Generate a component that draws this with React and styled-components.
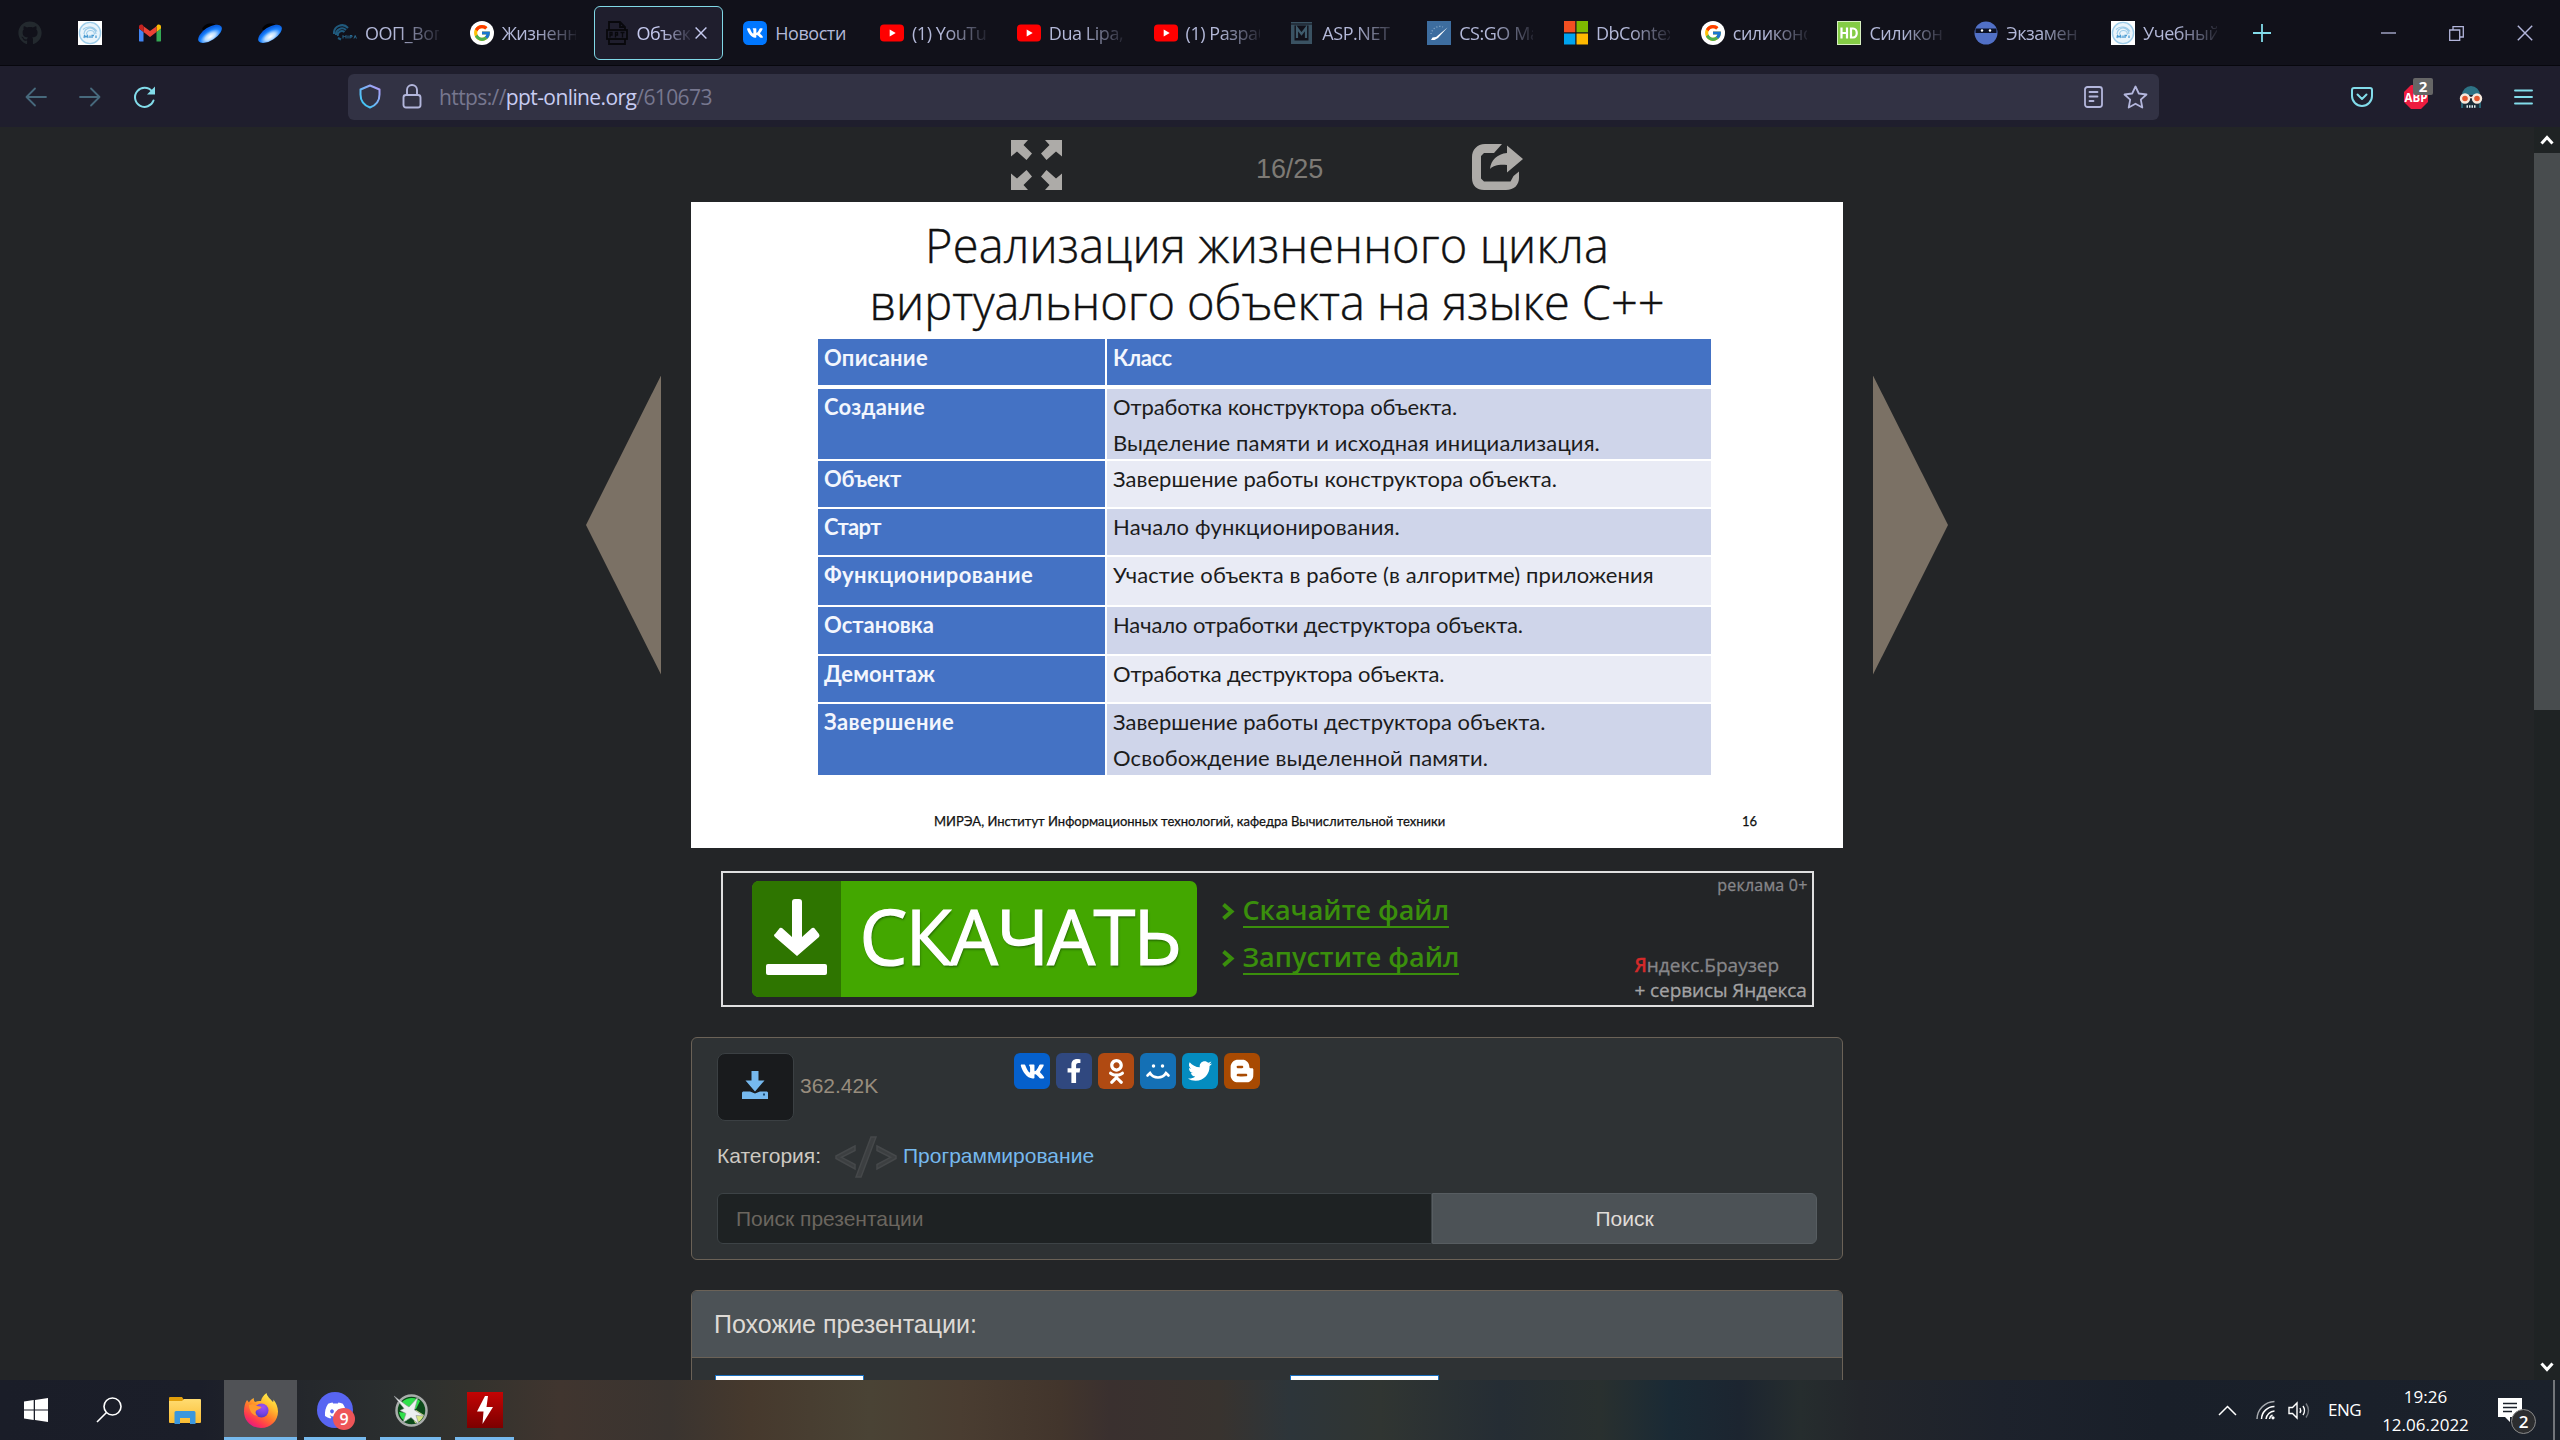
import React from "react";
import styled, { createGlobalStyle, css } from "styled-components";
import {
  FaGithub,
  FaVk,
  FaFacebookF,
  FaOdnoklassniki,
  FaTwitter,
  FaBloggerB,
  FaDiscord,
} from "react-icons/fa";
import { FcGoogle } from "react-icons/fc";

const UI = `"Open Sans", "Noto Sans", sans-serif`;
const ARIAL = `"Liberation Sans", Arial, sans-serif`;
const SLIDE = `Lato, Carlito, sans-serif`;

const GlobalStyle = createGlobalStyle`
  * { box-sizing: border-box; }
  html, body { margin: 0; padding: 0; overflow: hidden; background: #232527; }
  svg { display: block; flex: none; }
`;

const Screen = styled.div`
  width: 2560px;
  height: 1440px;
  display: flex;
  flex-direction: column;
  overflow: hidden;
  font-family: ${ARIAL};
`;

/* ---------- tab strip ---------- */

const TabStrip = styled.header`
  height: 66px;
  flex: none;
  display: flex;
  align-items: flex-start;
  padding-top: 6px;
  background: #11111a;
  border-bottom: 1px solid #07070d;
`;

const PinnedTabs = styled.div`
  display: flex;
  width: 317px;
`;

const PinnedTab = styled.div`
  width: 60px;
  height: 54px;
  display: flex;
  align-items: center;
  justify-content: center;
`;

const Tab = styled.div`
  width: 129px;
  height: 54px;
  margin: 0 3.9px;
  padding-left: ${(p) => (p.$active ? "11px" : "12px")};
  display: flex;
  align-items: center;
  gap: 8px;
  border-radius: 6px;
  ${(p) =>
    p.$active &&
    css`
      background: #1f1e2d;
      border: 1.5px solid #80d8e6;
    `}
`;

const TabTitle = styled.span`
  width: ${(p) => (p.$active ? "54px" : "74px")};
  overflow: hidden;
  white-space: nowrap;
  font: 400 18px/28px ${UI};
  letter-spacing: -0.45px;
  color: ${(p) => (p.$active ? "#c6caef" : "#b3b8d8")};
  ${(p) =>
    !p.$whole &&
    css`
      mask-image: linear-gradient(to right, #000 45%, rgba(0, 0, 0, 0.12) 100%);
    `}
`;

const CloseTab = styled.span`
  margin-left: -3px;
`;

const NewTab = styled.div`
  width: 60px;
  height: 54px;
  display: flex;
  align-items: center;
  justify-content: center;
`;

const WindowControls = styled.div`
  margin-left: auto;
  height: 54px;
  display: flex;
  align-items: center;
  gap: 53px;
  padding-right: 27px;
`;

/* ---------- navigation bar ---------- */

const NavBar = styled.nav`
  height: 61px;
  flex: none;
  display: flex;
  align-items: center;
  background: #1f1e2d;
`;

const NavButtons = styled.div`
  width: 348px;
  padding-left: 25px;
  display: flex;
  align-items: center;
  gap: 32px;
`;

const AddressBar = styled.div`
  width: 1811px;
  height: 46px;
  padding: 0 11px;
  display: flex;
  align-items: center;
  border-radius: 6px;
  background: #323244;
`;

const AddressIcon = styled.span`
  width: ${(p) => p.$w}px;
`;

const Url = styled.span`
  font: 400 21px/30px ${UI};
  letter-spacing: -0.6px;
  color: #77778f;
  white-space: pre;
  flex: 1;
  padding-top: 1px;
`;

const Domain = styled.span`
  color: #c8ccf2;
`;

const Extensions = styled.div`
  margin-left: auto;
  padding-right: 27px;
  display: flex;
  align-items: center;
  gap: 31px;
`;

const AdBlock = styled.div`
  position: relative;
`;

const AdBlockCount = styled.span`
  position: absolute;
  left: 9px;
  top: -7px;
  width: 20px;
  height: 17px;
  border-radius: 2px;
  background: #666;
  color: #fff;
  font: 700 15px/16px ${UI};
  text-align: center;
`;

/* ---------- page ---------- */

const Body = styled.main`
  height: 1253px;
  flex: none;
  display: flex;
  overflow: hidden;
`;

const Page = styled.div`
  width: 2534px;
  background: #232527;
  display: flex;
  flex-direction: column;
  align-items: center;
`;

const Scrollbar = styled.div`
  width: 26px;
  background: #1f2324;
  display: flex;
  flex-direction: column;
  align-items: center;
`;

const ScrollArrow = styled.div`
  height: 26px;
  width: 26px;
  display: flex;
  align-items: center;
  justify-content: center;
`;

const ScrollThumb = styled.div`
  width: 26px;
  height: 557px;
  background: #484c4e;
  margin-bottom: auto;
`;

const ViewerTools = styled.div`
  width: 1152px;
  height: 75px;
  flex: none;
  display: grid;
  grid-template-columns: 245px 215px auto;
  padding: 13px 0 0 320px;
`;

const PageCounter = styled.span`
  font: 400 27px/40px ${ARIAL};
  letter-spacing: -0.1px;
  padding-top: 9px;
  color: #7d7a75;
`;

const ShareIcon = styled.span`
  padding: 4px 0 0 1px;
`;

const Viewer = styled.div`
  display: flex;
  align-items: center;
  gap: 30px;
  flex: none;
`;

const SlideArrow = styled.div`
  width: 75px;
  height: 299px;
  background: #7b7165;
  clip-path: ${(p) =>
    p.$next ? "polygon(0 0, 100% 50%, 0 100%)" : "polygon(100% 0, 0 50%, 100% 100%)"};
`;

const Slide = styled.section`
  width: 1152px;
  height: 646px;
  background: #fff;
  display: flex;
  flex-direction: column;
  color: #1c1c1c;
`;

const SlideTitle = styled.h1`
  margin: 15px 0 0;
  height: 122px;
  font: 300 47px/57px ${UI};
  text-align: center;
  color: #111;
  -webkit-text-stroke: 0.4px #111;
  white-space: pre;
`;

const TitleLine = styled.div`
  letter-spacing: ${(p) => p.$ls}px;
`;

const SlideTable = styled.div`
  width: 894px;
  height: 436px;
  margin-left: 127px;
  display: grid;
  grid-template-columns: 287px 604px;
  grid-template-rows: 48px 70px 46px 46px 48px 47px 46px 71px;
  column-gap: 2px;
  row-gap: 2px;
`;

const Cell = styled.div`
  padding: 0 6px;
  font-family: ${SLIDE};
  font-size: 22px;
  line-height: 36px;
  white-space: nowrap;
  ${(p) =>
    p.$head
      ? css`
          background: #4472c4;
          color: #f3f6fd;
          font-weight: 700;
        `
      : css`
          background: ${p.$light ? "#e9ebf5" : "#cfd5ea"};
        `}
  ${(p) =>
    p.$top &&
    css`
      padding-top: 1px;
      margin-bottom: 2px;
    `}
`;

const CellText = styled.div`
  letter-spacing: ${(p) => p.$ls}px;
`;

const SlideFooter = styled.div`
  margin-top: 36px;
  padding: 0 86px 0 243px;
  display: flex;
  justify-content: space-between;
  font: 400 13px/20px ${SLIDE};
  color: #111;
  -webkit-text-stroke: 0.25px #111;
`;

/* ---------- advertisement ---------- */

const Ad = styled.section`
  width: 1093px;
  height: 136px;
  margin-top: 23px;
  flex: none;
  display: flex;
  align-items: center;
  border: 2px solid #dfdfe0;
  padding-left: 29px;
`;

const AdButton = styled.div`
  width: 445px;
  height: 116px;
  display: flex;
  border-radius: 7px;
  overflow: hidden;
  background: #43a700;
`;

const AdButtonIcon = styled.div`
  width: 89px;
  background: #2e7500;
  display: flex;
  align-items: center;
  justify-content: center;
  padding: 0 0 2px 2px;
`;

const AdButtonText = styled.div`
  padding-left: 19px;
  font: 400 76px/109px ${UI};
  letter-spacing: -1.8px;
  color: #fff;
  -webkit-text-stroke: 1.2px #fff;
  text-shadow: 1px 2px 2px rgba(20, 70, 0, 0.6);
`;

const AdLinks = styled.div`
  margin-left: 24px;
  display: flex;
  flex-direction: column;
  gap: 14px;
  padding-bottom: 8px;
`;

const AdLinkRow = styled.div`
  display: flex;
  align-items: center;
  gap: 8px;
`;

const AdLink = styled.span`
  font: 600 27px/29px ${UI};
  color: #3a8f0c;
  border-bottom: 2px solid #3a8f0c;
  height: 33px;
`;

const AdNotes = styled.div`
  margin-left: auto;
  align-self: stretch;
  width: 177px;
  display: flex;
  flex-direction: column;
  font: 400 19px/25px ${UI};
  color: #a3a3a4;
  -webkit-text-stroke: 0.3px currentColor;
  white-space: nowrap;
`;

const AdLabel = styled.span`
  font-size: 16px;
  line-height: 22px;
  letter-spacing: 0.2px;
  margin: 1px 4px auto 0;
  align-self: flex-end;
  color: #87878a;
`;

const AdBrand = styled.span`
  color: #87878a;
`;

const AdBrandInitial = styled.span`
  color: #d32a2a;
  font-weight: 600;
`;

const AdServices = styled.span`
  letter-spacing: -0.1px;
  margin-bottom: 2px;
`;

/* ---------- panels ---------- */

const Panel = styled.section`
  width: 1152px;
  flex: none;
  border: 1px solid #6b6257;
  border-radius: 6px;
  background: #2e3234;
  overflow: hidden;
`;

const InfoPanel = styled(Panel)`
  height: 223px;
  margin-top: 30px;
  padding: 15px 25px 0 25px;
`;

const InfoTop = styled.div`
  display: flex;
  align-items: flex-start;
  height: 68px;
`;

const DownloadButton = styled.div`
  width: 77px;
  height: 68px;
  border-radius: 8px;
  border: 1px solid #3b4043;
  background: #191b1d;
  display: flex;
  align-items: center;
  justify-content: center;
  padding: 0 2px 4px 0;
`;

const FileSize = styled.span`
  width: 214px;
  margin-left: 6px;
  font-size: 21px;
  line-height: 66px;
  color: #988d7e;
`;

const ShareRow = styled.div`
  display: flex;
  gap: 6px;
`;

const ShareButton = styled.div`
  width: 36px;
  height: 36px;
  border-radius: 6px;
  background: ${(p) => p.$bg};
  color: #fff;
  display: flex;
  align-items: center;
  justify-content: center;
`;

const Category = styled.div`
  height: 50px;
  margin-top: 10px;
  display: flex;
  align-items: center;
  font-size: 21px;
  color: #cdc9c2;
`;

const CodeIcon = styled.span`
  margin: 1px 6px 0 14px;
`;

const CategoryLink = styled.span`
  color: #76b9ee;
`;

const SearchRow = styled.div`
  display: flex;
  margin-top: 12px;
  font-size: 21px;
  line-height: 49px;
`;

const SearchInput = styled.div`
  width: 715px;
  height: 51px;
  padding-left: 18px;
  border: 1px solid #3d4346;
  border-radius: 6px 0 0 6px;
  background: #1e2223;
  color: #6b665f;
`;

const SearchButton = styled.div`
  width: 385px;
  height: 51px;
  border-radius: 0 6px 6px 0;
  border: 1px solid #575d61;
  background: #4c5256;
  color: #e0ddd9;
  text-align: center;
`;

const SimilarPanel = styled(Panel)`
  height: 140px;
  margin-top: 30px;
  border-radius: 6px 6px 0 0;
`;

const SimilarHeader = styled.h2`
  margin: 0;
  height: 67px;
  padding: 0 0 0 22px;
  border-bottom: 1px solid #6b6257;
  background: #4c5256;
  font: 400 25px/66px ${ARIAL};
  color: #dedad5;
`;

const SimilarList = styled.div`
  display: grid;
  grid-template-columns: 575px 575px;
  padding: 17px 0 0 23px;
`;

const Thumb = styled.div`
  width: 149px;
  height: 90px;
  border: 1px solid #1a70c0;
  background: #fff;
`;

/* ---------- taskbar ---------- */

const Taskbar = styled.footer`
  height: 60px;
  flex: none;
  display: flex;
  background: linear-gradient(
    to right,
    #1a1d28 0px,
    #1b1e29 200px,
    #25282c 310px,
    #2b2f2f 400px,
    #33322d 470px,
    #40352f 560px,
    #3a3430 670px,
    #46392d 750px,
    #4a4335 870px,
    #4a3d31 960px,
    #42352c 1060px,
    #3a302f 1110px,
    #38332f 1220px,
    #2d353a 1290px,
    #303532 1380px,
    #252d34 1500px,
    #29302f 1600px,
    #1a2a35 1670px,
    #1c2530 1740px,
    #262d2e 1800px,
    #23262b 1860px,
    #1d222c 2000px,
    #191f29 2160px,
    #1b212b 2560px
  );
`;

const TaskItem = styled.div`
  width: ${(p) => p.$w}px;
  height: 60px;
  display: flex;
  align-items: center;
  justify-content: center;
  position: relative;
  ${(p) => p.$active && "background: #505256;"}
  ${(p) =>
    p.$open &&
    css`
      &::after {
        content: "";
        position: absolute;
        bottom: 0;
        left: ${p.$active ? 0 : "7px"};
        right: ${p.$active ? 0 : "7px"};
        height: 3px;
        background: #76b9ed;
      }
    `}
`;

const DiscordTile = styled.div`
  width: 36px;
  height: 36px;
  border-radius: 50%;
  background: #5865f2;
  color: #fff;
  display: flex;
  align-items: center;
  justify-content: center;
  position: relative;
`;

const DiscordCount = styled.span`
  position: absolute;
  left: 16px;
  top: 16px;
  width: 22px;
  height: 22px;
  border-radius: 50%;
  background: #ee5558;
  font: 600 16px/22px ${UI};
  text-align: center;
`;

const BoltTile = styled.div`
  width: 36px;
  height: 36px;
  background: linear-gradient(#c40404, #7c0000);
  display: flex;
  align-items: center;
  justify-content: center;
`;

const Tray = styled.div`
  margin-left: auto;
  display: flex;
  align-items: center;
  color: #fff;
  font: 400 17px/28px ${UI};
`;

const TrayIcon = styled.span`
  margin-right: ${(p) => p.$mr}px;
`;

const Language = styled.span`
  width: 54px;
  letter-spacing: -0.5px;
`;

const Clock = styled.div`
  width: 87px;
  height: 60px;
  padding-top: 3px;
  text-align: center;
  white-space: nowrap;
  margin-right: 29px;
`;

const Notifications = styled.div`
  width: 24px;
  height: 24px;
  margin-right: 31px;
  position: relative;
`;

const NotificationCount = styled.span`
  position: absolute;
  left: 13px;
  top: 11px;
  width: 25px;
  height: 25px;
  border-radius: 50%;
  border: 1px solid #8a8a8a;
  background: #2c2d2f;
  font: 600 17px/23px ${UI};
  text-align: center;
`;

const ShowDesktop = styled.div`
  width: 7px;
  height: 60px;
  border-left: 2px solid #72757b;
`;

/* ---------- drawings ---------- */

const MireaIcon = () => (
  <svg width="24" height="24" viewBox="0 0 24 24">
    <rect width="24" height="24" fill="#fff" />
    <circle cx="12" cy="12" r="10.6" fill="#e9f4fb" stroke="#9ecdea" strokeWidth="1.4" />
    <path d="M6 13a6 6 0 0 1 12 0M8.500 13.500a4 4 0 0 1 8 0M5 8.500a9 9 0 0 1 14 2" fill="none" stroke="#9ccbe9" strokeWidth="1.200" />
    <path d="M6 17l.500-2.500 1.500 1.500 1.500-1.500.500 2.500M12 14.500v2.500M14 17v-2.500h2M18 14.500v2.500" fill="none" stroke="#4a9bd2" strokeWidth="1.300" />
  </svg>
);

const GmailIcon = () => (
  <svg width="24" height="24" viewBox="0 0 24 24">
    <path d="M1.500 20.500h4V11L1 7.600V20z" fill="#4285f4" />
    <path d="M18.500 20.500h4L23 20V7.600L18.500 11z" fill="#34a853" />
    <path d="M18.500 5.200V11L23 7.600V5.800c0-2-2.300-2.900-3.700-1.800z" fill="#fbbc04" />
    <path d="M5.500 11V5.200L12 10l6.500-4.800V11L12 15.900z" fill="#ea4335" />
    <path d="M1 5.800v1.800L5.500 11V5.200L4.700 4C3.300 2.900 1 3.800 1 5.800z" fill="#c5221f" />
  </svg>
);

const DiskIcon = () => (
  <svg width="26" height="24" viewBox="0 0 26 24">
    <defs>
      <radialGradient id="disk" cx="0.45" cy="0.7" r="0.6">
        <stop offset="0" stopColor="#fff" />
        <stop offset="0.35" stopColor="#b9dcff" />
        <stop offset="0.7" stopColor="#1d84ff" />
        <stop offset="1" stopColor="#0a5fe0" />
      </radialGradient>
    </defs>
    <path d="M5 8C7 3 14 1 19 4L9 11z" fill="#020204" />
    <ellipse cx="13" cy="12.800" rx="13.500" ry="6.500" transform="rotate(-33 13 12.800)" fill="url(#disk)" />
  </svg>
);

const RadarIcon = () => (
  <svg width="24" height="24" viewBox="0 0 24 24">
    <path d="M1 13A8 8 0 0 1 15 7M3 14a6 6 0 0 1 10-5M5 15a4 4 0 0 1 6.500-4M5 17l3 1.500" fill="none" stroke="#205a7d" strokeWidth="2" />
    <path d="M10 17.500v-3l1.500 1.500 1.500-1.500v3M15 14.500v3M17 17.500v-3h2v1.500h-2M21 17.500l1.200-3 1.200 3" fill="none" stroke="#2b6a90" strokeWidth="1" />
  </svg>
);

const GoogleIcon = () => (
  <svg width="24" height="24" viewBox="0 0 24 24">
    <circle cx="12" cy="12" r="12" fill="#fff" />
    <FcGoogle x="2.500" y="2.500" size={19} />
  </svg>
);

const PptIcon = () => (
  <svg width="22" height="24" viewBox="0 0 22 24" fill="none" stroke="#08080c" strokeWidth="1.800">
    <path d="M3 9V1h11l5 5v3M14 1v5h5M3 18v5h16v-5" />
    <rect x="1" y="9" width="20" height="9" />
    <path d="M4 16.500v-5h2v2.500H4M9.500 16.500v-5h2v2.500h-2M14.500 11.500h4M16.500 11.500v5" strokeWidth="1.300" />
  </svg>
);

const VkTabIcon = () => (
  <svg width="24" height="24" viewBox="0 0 24 24">
    <rect width="24" height="24" rx="5.500" fill="#07f" />
    <FaVk x="3.500" y="3.500" size={17} color="#fff" />
  </svg>
);

const YoutubeIcon = () => (
  <svg width="24" height="24" viewBox="0 0 24 24">
    <rect y="3.500" width="24" height="17" rx="4" fill="#f00" />
    <path d="M9.700 8.500v7l6-3.500z" fill="#fff" />
  </svg>
);

const MetanitIcon = () => (
  <svg width="24" height="24" viewBox="0 0 24 24">
    <path d="M1 1h21v22H1zM4.500 4.500v15h14v-15z" fill="#3a5262" fillRule="evenodd" />
    <path d="M1 3h21" stroke="#11111a" strokeWidth="1" />
    <path d="M7 17V7l4.500 6L16 7v10" fill="none" stroke="#3f5b6c" strokeWidth="2.200" />
  </svg>
);

const CsgoIcon = () => (
  <svg width="24" height="24" viewBox="0 0 24 24">
    <rect width="24" height="24" fill="#3d6d9f" />
    <path d="M4 19l1.500-2.500 3.500-.500L20.500 6.500 11 17l-3.500 2z" fill="#fff" />
    <path d="M4 13a9 9 0 0 1 12-7" fill="none" stroke="#8fb0cf" strokeWidth="1.200" strokeDasharray="1 2" />
  </svg>
);

const MicrosoftIcon = () => (
  <svg width="24" height="24" viewBox="0 0 24 24">
    <path d="M0 0h11.300v11.300H0z" fill="#f25022" />
    <path d="M12.500 0H24v11.300H12.500z" fill="#7fba00" />
    <path d="M0 12.500h11.300V23.500H0z" fill="#00a4ef" />
    <path d="M12.500 12.500H24V23.500H12.500z" fill="#ffb900" />
  </svg>
);

const HdIcon = () => (
  <svg width="24" height="24" viewBox="0 0 24 24">
    <rect width="24" height="24" fill="#84cc45" />
    <rect x="0.500" y="0.500" width="23" height="23" fill="none" stroke="#d6efc0" />
    <path d="M4.500 6.500v11M10 6.500v11M4.500 12H10M14 7.500v9h2c5 0 5-9 0-9z" fill="none" stroke="#fff" strokeWidth="2.200" />
  </svg>
);

const NinjaIcon = () => (
  <svg width="24" height="24" viewBox="0 0 24 24">
    <circle cx="12" cy="12" r="11.500" fill="#5170c6" />
    <path d="M1.500 7.500h21v4.500h-21z" fill="#0d1226" />
    <circle cx="8" cy="9.500" r="1.200" fill="#fff" />
    <circle cx="16" cy="9.500" r="1.200" fill="#fff" />
  </svg>
);

const CloseIcon = ({ size = 10, color = "#c6caef" }) => (
  <svg width={size} height={size} viewBox="0 0 10 10">
    <path d="M.5.500l9 9M9.500.500l-9 9" stroke={color} strokeWidth={size > 12 ? 0.9 : 1.2} />
  </svg>
);

const ArrowIcon = ({ flip }) => (
  <svg width="22" height="20" viewBox="0 0 22 20" transform={flip ? "scale(-1 1)" : undefined}>
    <path d="M21 10H1.500M10 1.500L1.500 10l8.500 8.500" fill="none" stroke="#47697c" strokeWidth="1.800" strokeLinecap="round" strokeLinejoin="round" />
  </svg>
);

const ReloadIcon = () => (
  <svg width="24" height="24" viewBox="0 0 24 24">
    <path d="M20.500 15.500A9.500 9.500 0 1 1 19 6.500" fill="none" stroke="#82dcea" strokeWidth="2" strokeLinecap="round" />
    <path d="M22 1.500v8h-8z" fill="#82dcea" />
  </svg>
);

const ShieldIcon = () => (
  <svg width="22" height="25" viewBox="0 0 22 25">
    <defs>
      <linearGradient id="shield" x1="1" y1="0" x2="0" y2="1">
        <stop offset="0" stopColor="#b79bf7" />
        <stop offset="1" stopColor="#2ccdf5" />
      </linearGradient>
    </defs>
    <path d="M11 1.500l9.500 4v5c0 6.500-4 11-9.500 13C5.500 21.500 1.500 17 1.500 10.500v-5z" fill="none" stroke="url(#shield)" strokeWidth="2" strokeLinejoin="round" />
  </svg>
);

const LockIcon = () => (
  <svg width="20" height="25" viewBox="0 0 20 25" fill="none" stroke="#b3b6dc" strokeWidth="1.900">
    <rect x="1.500" y="11" width="17" height="12.500" rx="2.500" />
    <path d="M5 11V6a5 5 0 0 1 10 0v5" />
  </svg>
);

const ReaderIcon = () => (
  <svg width="19" height="22" viewBox="0 0 19 22" fill="none" stroke="#b3b6dc" strokeWidth="1.800" strokeLinecap="round">
    <rect x="1" y="1" width="17" height="20" rx="2.500" />
    <path d="M5.500 6h8M5.500 10.500h8M5.500 15h4" />
  </svg>
);

const StarIcon = () => (
  <svg width="25" height="24" viewBox="0 0 25 24">
    <path d="M12.500 1.500l3.300 7 7.700 1-5.700 5.200 1.500 7.800-6.800-3.800-6.800 3.800 1.500-7.800L1.500 9.500l7.700-1z" fill="none" stroke="#b3b6dc" strokeWidth="1.800" strokeLinejoin="round" />
  </svg>
);

const PocketIcon = () => (
  <svg width="22" height="20" viewBox="0 0 22 20" fill="none" stroke="#82dcea" strokeWidth="2" strokeLinejoin="round" strokeLinecap="round">
    <path d="M3 1h16a2 2 0 0 1 2 2v6a10 10 0 0 1-20 0V3a2 2 0 0 1 2-2z" />
    <path d="M6.500 7.500L11 12l4.500-4.500" />
  </svg>
);

const StopIcon = () => (
  <svg width="24" height="24" viewBox="0 0 24 24">
    <path d="M7 0h10l7 7v10l-7 7H7l-7-7V7z" fill="#ee1c3f" />
    <text x="12" y="16.500" textAnchor="middle" fontFamily="Open Sans" fontWeight="700" fontSize="11.500" fill="#fff">
      ABP
    </text>
  </svg>
);

const AgentIcon = () => (
  <svg width="24" height="24" viewBox="0 0 24 24">
    <path d="M3 10a9 9 0 0 1 18 0z" fill="#2d7284" />
    <path d="M3 14h18v9H3z" fill="#1a2c38" />
    <path d="M3 16v7M21 16v7" stroke="#2d7284" strokeWidth="1.600" />
    <circle cx="6" cy="13.500" r="4" fill="#e4572e" stroke="#f6e8dc" strokeWidth="2.400" />
    <circle cx="18" cy="13.500" r="4" fill="#e4572e" stroke="#f6e8dc" strokeWidth="2.400" />
    <path d="M10 12.500h4" stroke="#f6e8dc" strokeWidth="1.500" />
    <path d="M7.500 21.500h9" stroke="#dfe9ec" strokeWidth="2.500" strokeDasharray="1.500 1" />
  </svg>
);

const MenuIcon = () => (
  <svg width="19" height="16" viewBox="0 0 19 16">
    <path d="M1 1.500h17M1 8h17M1 14.500h17" stroke="#82dcea" strokeWidth="1.900" strokeLinecap="round" />
  </svg>
);

const ExpandIcon = () => (
  <svg width="51" height="50" viewBox="0 0 51 50" fill="#adaba8">
    <path d="M0 0h17l-4.500 5L21 13.500 15.500 20 6 11.500 0 16.500z" />
    <path d="M51 0H34l4.500 5L30 13.500l5.500 6.500 9.500-8.500 6 5z" />
    <path d="M0 50h17l-4.500-5 8.500-8.500-5.500-6.500L6 38.500 0 33.500z" />
    <path d="M51 50H34l4.500-5-8.500-8.500 5.500-6.500 9.500 8.500 6-5z" />
  </svg>
);

const ShareOutIcon = () => (
  <svg width="51" height="47" viewBox="0 0 51 47" fill="#adaba8">
    <path d="M30 0H13C5 0 0 6 0 13v21c0 8 5 12 12 12h22c8 0 13-5 13-12v-6.500l-5.500 4.500-3 5.500H12l-3-3V12l3-3h10z" />
    <path d="M35 1.500l16 13.500L35 28.500V21c-8-.500-13 0-17 4 1-9 7-15 17-16z" />
  </svg>
);

const AdArrowIcon = () => (
  <svg width="62" height="78" viewBox="0 0 62 78">
    <path d="M26 3q0-3 3-3h4q3 0 3 3v35l10-9q2-1 3 1l4 5q1 2 0 3L31 57 9 38q-2-2 0-3l4-5q1-2 3-1l10 9z" fill="#fff" />
    <rect y="65" width="61" height="11" rx="2" fill="#fff" />
  </svg>
);

const AdChevron = () => (
  <svg width="14" height="17" viewBox="0 0 14 17">
    <path d="M2.500 1.500L10.500 8.500l-8 7" fill="none" stroke="#3a8f0c" strokeWidth="4" />
  </svg>
);

const SaveIcon = () => (
  <svg width="26" height="28" viewBox="0 0 26 28" fill="#76b9ee">
    <path d="M9.500 0h7v9.500h6L13 20.500 3.500 9.500h6z" />
    <path d="M1 20.500h7l5 2 5-2h7l1 1v6.500H0v-6.500z" />
    <rect x="21" y="22.500" width="2" height="2" fill="#1b4a70" />
  </svg>
);

const BracketsIcon = () => (
  <svg width="62" height="42" viewBox="0 0 62 42" fill="none" stroke="#45484a" strokeWidth="1.500">
    <path d="M20 10L1 20v2.500L20 33v-4.500L6.500 21.300 20 14.500zM42 10l19 10v2.500L42 33v-4.500l13.500-7.200L42 14.500zM36 1h5L26 41h-5z" fill="#3c3f41" />
  </svg>
);

const SmileIcon = () => (
  <svg width="26" height="24" viewBox="0 0 26 24" fill="none" stroke="#fff" strokeWidth="2.600" strokeLinecap="round">
    <path d="M2.500 16.500L5 14c3.500 6 12.500 6 16 0l2.500 2.500" />
    <circle cx="8.500" cy="7" r="1" fill="#fff" strokeWidth="1.500" />
    <circle cx="17.500" cy="7" r="1" fill="#fff" strokeWidth="1.500" />
  </svg>
);

const ChevronIcon = ({ down }) => (
  <svg width="14" height="10" viewBox="0 0 14 10">
    <path d={down ? "M1.500 1.500L7 7.500l5.500-6" : "M1.500 8.500L7 2.500l5.500 6"} fill="none" stroke="#fff" strokeWidth="3" />
  </svg>
);

const WindowsIcon = () => (
  <svg width="24" height="24" viewBox="0 0 24 24" fill="#fff">
    <path d="M0 3.500l9.700-1.400v9.300H0zM11 1.900L24 0v11.400H11zM0 12.600h9.700v9.300L0 20.500zM11 12.600h13V24l-13-1.900z" />
  </svg>
);

const SearchIcon = () => (
  <svg width="26" height="26" viewBox="0 0 26 26" fill="none" stroke="#fff" strokeWidth="1.600">
    <circle cx="16.500" cy="9.500" r="8.500" />
    <path d="M10.500 15.500L1 25" />
  </svg>
);

const FolderIcon = () => (
  <svg width="32" height="27" viewBox="0 0 32 27">
    <defs>
      <linearGradient id="folder" x1="0" y1="0" x2="0" y2="1">
        <stop offset="0" stopColor="#ffdc72" />
        <stop offset="1" stopColor="#fbbd33" />
      </linearGradient>
    </defs>
    <path d="M0 1q0-1 1-1h12l2 3-2 3H0z" fill="#e29f0b" />
    <path d="M0 4h13l2-2h16q1 0 1 1v22q0 1-1 1H1q-1 0-1-1z" fill="url(#folder)" />
    <path d="M5.500 27V15.500q0-1.500 1.500-1.500h18q1.500 0 1.500 1.500V27H21v-6H11v6z" fill="#3b97de" />
  </svg>
);

const FirefoxIcon = () => (
  <svg width="34" height="35" viewBox="0 0 34 35">
    <defs>
      <linearGradient id="fox" x1="0.850" y1="0.050" x2="0.250" y2="1">
        <stop offset="0" stopColor="#fff44f" />
        <stop offset="0.300" stopColor="#ffbd2f" />
        <stop offset="0.550" stopColor="#ff7a2a" />
        <stop offset="0.800" stopColor="#ff3750" />
        <stop offset="1" stopColor="#e31587" />
      </linearGradient>
      <radialGradient id="globe" cx="0.600" cy="0.250" r="0.800">
        <stop offset="0" stopColor="#a052f2" />
        <stop offset="0.600" stopColor="#7542e5" />
        <stop offset="1" stopColor="#4a3ab8" />
      </radialGradient>
    </defs>
    <path d="M3 7c1 1 1.500 2 2 2.500 1-2 3-4 5-4.500-.500 1.500 0 3 1 4 2-1 4-1.300 6-1C17.500 5 19.500 2 22.500 0c.500 3.500 4 6 6.500 9 .500-.500.500-1.500.300-2.500C32 9.500 34 14 34 18.500 34 28 26.500 35 17 35S0 28 0 18.500C0 13.500 1 10 3 7z" fill="url(#fox)" />
    <circle cx="17.500" cy="17.500" r="7" fill="url(#globe)" />
    <path d="M5 12c4-2 6 0 8 1 2 .500 4 .500 4.500 1-1 2.500-4 2-5.500 4-1 2 0 4 2 5-5 0-9-5-9-11z" fill="#ff9a2e" />
  </svg>
);

const JetIcon = () => (
  <svg width="34" height="34" viewBox="0 0 34 34">
    <circle cx="17.500" cy="17.500" r="15" fill="#0c4a1a" stroke="#a9adab" strokeWidth="2.500" />
    <path d="M8 9c5-5 14-5 18-1l-4 8-8 1zM5 19l7 1 1 8c-4 0-7-4-8-9z" fill="#2fe04b" />
    <path d="M22 17l8 5c-2 5-6 8-9 8l-3-7z" fill="#d8e884" />
    <path d="M0 3l12 9 3 2 9-10-3.500 13L30 23l-8-.500 3 9-8-7-8 5 3-9-6-3 4-2z" fill="#eceff0" stroke="#8b8f90" strokeWidth="0.600" />
  </svg>
);

const BoltIcon = () => (
  <svg width="16" height="28" viewBox="0 0 16 28">
    <path d="M8 0L0 15.500h6.500L5.500 28 16 11H9.500L11 0z" fill="#fff" />
  </svg>
);

const TrayUpIcon = () => (
  <svg width="19" height="11" viewBox="0 0 19 11">
    <path d="M1 10l8.500-8.500L18 10" fill="none" stroke="#fff" strokeWidth="1.500" />
  </svg>
);

const WifiIcon = () => (
  <svg width="20" height="20" viewBox="0 0 20 20" fill="none" strokeWidth="1.500">
    <path d="M1 19A18 18 0 0 1 18.500 1.500" stroke="#a7aaaf" />
    <path d="M5.500 19A13 13 0 0 1 18.500 6.500M10 19a9 9 0 0 1 8.500-8" stroke="#fff" />
    <path d="M13.500 19a5 5 0 0 1 3-4" stroke="#fff" />
    <circle cx="17" cy="17.800" r="1.600" fill="#fff" />
  </svg>
);

const SoundIcon = () => (
  <svg width="23" height="19" viewBox="0 0 23 19" fill="none" stroke="#fff" strokeWidth="1.400">
    <path d="M1 6.500h3.500L9 2v15l-4.500-4.500H1z" />
    <path d="M12 7q1.500 2.500 0 5M15 5q3 4.500 0 9" />
    <path d="M18 2.500q5 7 0 14" stroke="#73777d" />
  </svg>
);

const MessageIcon = () => (
  <svg width="24" height="24" viewBox="0 0 24 24">
    <path d="M0 0h24v19H12v5l-5-5H0z" fill="#fff" />
    <path d="M5 5.500h14M5 9.500h14M5 13.500h9" stroke="#1b212b" strokeWidth="1.300" />
  </svg>
);

const RestoreIcon = () => (
  <svg width="15" height="15" viewBox="0 0 15 15" fill="none" stroke="#b3b6dc" strokeWidth="1.300">
    <path d="M.700 4h10v10.300H.700zM4 4V.700h10.300V11H11" />
  </svg>
);

/* ---------- content ---------- */

const tabs = [
  { icon: <RadarIcon />, title: "ООП_Вопро" },
  { icon: <GoogleIcon />, title: "Жизненный" },
  { icon: <PptIcon />, title: "Объектно", active: true },
  { icon: <VkTabIcon />, title: "Новости", whole: true },
  { icon: <YoutubeIcon />, title: "(1) YouTube" },
  { icon: <YoutubeIcon />, title: "Dua Lipa, D" },
  { icon: <YoutubeIcon />, title: "(1) Разраб" },
  { icon: <MetanitIcon />, title: "ASP.NET" },
  { icon: <CsgoIcon />, title: "CS:GO Ma" },
  { icon: <MicrosoftIcon />, title: "DbContext" },
  { icon: <GoogleIcon />, title: "силиконов" },
  { icon: <HdIcon />, title: "Силикон" },
  { icon: <NinjaIcon />, title: "Экзамен" },
  { icon: <MireaIcon />, title: "Учебный" },
];

const tableRows = [
  { name: "Создание", ls: 0.27, lines: [["Отработка конструктора объекта.", -0.13], ["Выделение памяти и исходная инициализация.", 0.14]] },
  { name: "Объект", ls: -0.2, lines: [["Завершение работы конструктора объекта.", 0.02]] },
  { name: "Старт", ls: -0.6, lines: [["Начало функционирования.", 0.2]] },
  { name: "Функционирование", ls: 0.4, lines: [["Участие объекта в работе (в алгоритме) приложения", 0.11]] },
  { name: "Остановка", ls: 0, lines: [["Начало отработки деструктора объекта.", -0.11]] },
  { name: "Демонтаж", ls: 0.1, lines: [["Отработка деструктора объекта.", -0.2]] },
  { name: "Завершение", ls: 0.4, lines: [["Завершение работы деструктора объекта.", 0], ["Освобождение выделенной памяти.", 0.12]] },
];

const shares = [
  { bg: "#0560cc", icon: <FaVk size={25} /> },
  { bg: "#30487f", icon: <FaFacebookF size={24} /> },
  { bg: "#b04a12", icon: <FaOdnoklassniki size={25} /> },
  { bg: "#1470b5", icon: <SmileIcon /> },
  { bg: "#048cc0", icon: <FaTwitter size={24} /> },
  { bg: "#a84a02", icon: <FaBloggerB size={26} /> },
];

export default function App() {
  return (
    <Screen>
      <GlobalStyle />
      <TabStrip>
        <PinnedTabs>
          <PinnedTab><FaGithub size={24} color="#23292e" /></PinnedTab>
          <PinnedTab><MireaIcon /></PinnedTab>
          <PinnedTab><GmailIcon /></PinnedTab>
          <PinnedTab><DiskIcon /></PinnedTab>
          <PinnedTab><DiskIcon /></PinnedTab>
        </PinnedTabs>
        {tabs.map((t, i) => (
          <Tab key={i} $active={t.active}>
            {t.icon}
            <TabTitle $active={t.active} $whole={t.whole}>{t.title}</TabTitle>
            {t.active && <CloseTab><CloseIcon size={12} /></CloseTab>}
          </Tab>
        ))}
        <NewTab>
          <svg width="18" height="18" viewBox="0 0 18 18">
            <path d="M9 0v18M0 9h18" stroke="#82dcea" strokeWidth="1.800" />
          </svg>
        </NewTab>
        <WindowControls>
          <svg width="15" height="2" viewBox="0 0 15 2"><path d="M0 1h15" stroke="#b3b6dc" strokeWidth="1.300" /></svg>
          <RestoreIcon />
          <CloseIcon size={16} color="#b3b6dc" />
        </WindowControls>
      </TabStrip>

      <NavBar>
        <NavButtons>
          <ArrowIcon />
          <ArrowIcon flip />
          <ReloadIcon />
        </NavButtons>
        <AddressBar>
          <AddressIcon $w={43}><ShieldIcon /></AddressIcon>
          <AddressIcon $w={37}><LockIcon /></AddressIcon>
          <Url>https://<Domain>ppt-online.org</Domain>/610673</Url>
          <AddressIcon $w={39}><ReaderIcon /></AddressIcon>
          <AddressIcon $w={25}><StarIcon /></AddressIcon>
        </AddressBar>
        <Extensions>
          <PocketIcon />
          <AdBlock>
            <StopIcon />
            <AdBlockCount>2</AdBlockCount>
          </AdBlock>
          <AgentIcon />
          <MenuIcon />
        </Extensions>
      </NavBar>

      <Body>
        <Page>
          <ViewerTools>
            <ExpandIcon />
            <PageCounter>16/25</PageCounter>
            <ShareIcon><ShareOutIcon /></ShareIcon>
          </ViewerTools>

          <Viewer>
            <SlideArrow />
            <Slide>
              <SlideTitle>
                <TitleLine $ls={0.16}>Реализация жизненного цикла</TitleLine>
                <TitleLine $ls={-0.07}>виртуального объекта на языке C++</TitleLine>
              </SlideTitle>
              <SlideTable>
                <Cell $head $top><CellText $ls={0.27}>Описание</CellText></Cell>
                <Cell $head $top><CellText $ls={-0.4}>Класс</CellText></Cell>
                {tableRows.map((r, i) => (
                  <React.Fragment key={r.name}>
                    <Cell $head><CellText $ls={r.ls}>{r.name}</CellText></Cell>
                    <Cell $light={i % 2 === 1}>
                      {r.lines.map(([text, ls]) => (
                        <CellText key={text} $ls={ls}>{text}</CellText>
                      ))}
                    </Cell>
                  </React.Fragment>
                ))}
              </SlideTable>
              <SlideFooter>
                <span>МИРЭА, Институт Информационных технологий, кафедра Вычислительной техники</span>
                <span>16</span>
              </SlideFooter>
            </Slide>
            <SlideArrow $next />
          </Viewer>

          <Ad>
            <AdButton>
              <AdButtonIcon><AdArrowIcon /></AdButtonIcon>
              <AdButtonText>СКАЧАТЬ</AdButtonText>
            </AdButton>
            <AdLinks>
              <AdLinkRow><AdChevron /><AdLink>Скачайте файл</AdLink></AdLinkRow>
              <AdLinkRow><AdChevron /><AdLink>Запустите файл</AdLink></AdLinkRow>
            </AdLinks>
            <AdNotes>
              <AdLabel>реклама 0+</AdLabel>
              <AdBrand><AdBrandInitial>Я</AdBrandInitial>ндекс.Браузер</AdBrand>
              <AdServices>+ сервисы Яндекса</AdServices>
            </AdNotes>
          </Ad>

          <InfoPanel>
            <InfoTop>
              <DownloadButton><SaveIcon /></DownloadButton>
              <FileSize>362.42K</FileSize>
              <ShareRow>
                {shares.map((s) => (
                  <ShareButton key={s.bg} $bg={s.bg}>{s.icon}</ShareButton>
                ))}
              </ShareRow>
            </InfoTop>
            <Category>
              Категория:
              <CodeIcon><BracketsIcon /></CodeIcon>
              <CategoryLink>Программирование</CategoryLink>
            </Category>
            <SearchRow>
              <SearchInput>Поиск презентации</SearchInput>
              <SearchButton>Поиск</SearchButton>
            </SearchRow>
          </InfoPanel>

          <SimilarPanel>
            <SimilarHeader>Похожие презентации:</SimilarHeader>
            <SimilarList>
              <Thumb />
              <Thumb />
            </SimilarList>
          </SimilarPanel>
        </Page>
        <Scrollbar>
          <ScrollArrow><ChevronIcon /></ScrollArrow>
          <ScrollThumb />
          <ScrollArrow><ChevronIcon down /></ScrollArrow>
        </Scrollbar>
      </Body>

      <Taskbar>
        <TaskItem $w={72}><WindowsIcon /></TaskItem>
        <TaskItem $w={73}><SearchIcon /></TaskItem>
        <TaskItem $w={79}><FolderIcon /></TaskItem>
        <TaskItem $w={73} $open $active><FirefoxIcon /></TaskItem>
        <TaskItem $w={76} $open>
          <DiscordTile>
            <FaDiscord size={23} />
            <DiscordCount>9</DiscordCount>
          </DiscordTile>
        </TaskItem>
        <TaskItem $w={75} $open><JetIcon /></TaskItem>
        <TaskItem $w={73} $open><BoltTile><BoltIcon /></BoltTile></TaskItem>
        <Tray>
          <TrayIcon $mr={19}><TrayUpIcon /></TrayIcon>
          <TrayIcon $mr={12}><WifiIcon /></TrayIcon>
          <TrayIcon $mr={17}><SoundIcon /></TrayIcon>
          <Language>ENG</Language>
          <Clock>
            <div>19:26</div>
            <div>12.06.2022</div>
          </Clock>
          <Notifications>
            <MessageIcon />
            <NotificationCount>2</NotificationCount>
          </Notifications>
          <ShowDesktop />
        </Tray>
      </Taskbar>
    </Screen>
  );
}
